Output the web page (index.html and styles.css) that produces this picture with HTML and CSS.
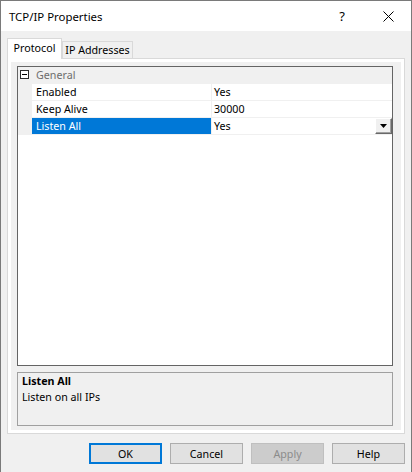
FILE: index.html
```html
<!DOCTYPE html>
<html>
<head>
<meta charset="utf-8">
<title>TCP/IP Properties</title>
<link rel="stylesheet" href="styles.css">
</head>
<body>
<div class="window">
  <div class="titlebar">
    <span class="title">TCP/IP Properties</span>
    <span class="tb-btn help">?</span>
    <span class="tb-btn close">
      <svg width="11" height="11" viewBox="0 0 11 11"><path d="M0.5 0.5 L10.5 10.5 M10.5 0.5 L0.5 10.5" stroke="#000" stroke-width="1" fill="none"/></svg>
    </span>
  </div>
  <div class="body">
    <div class="tabs">
      <div class="tab active">Protocol</div>
      <div class="tab">IP Addresses</div>
      <div class="tab-fill"></div>
    </div>
    <div class="panel">
      <div class="page">
        <div class="grid">
          <div class="row cat">
            <span class="margin"><span class="minus"></span></span>
            <span class="catname">General</span>
          </div>
          <div class="row">
            <span class="margin"></span>
            <span class="name">Enabled</span>
            <span class="value">Yes</span>
          </div>
          <div class="row">
            <span class="margin"></span>
            <span class="name">Keep Alive</span>
            <span class="value">30000</span>
          </div>
          <div class="row sel">
            <span class="margin"></span>
            <span class="name">Listen All</span>
            <span class="value">Yes
              <span class="drop"><svg width="7" height="4" viewBox="0 0 7 4"><path d="M0 0 H7 L3.5 4 Z" fill="#000"/></svg></span>
            </span>
          </div>
        </div>
        <div class="desc">
          <div class="desc-title">Listen All</div>
          <div class="desc-text">Listen on all IPs</div>
        </div>
      </div>
    </div>
    <div class="buttons">
      <button class="btn default">OK</button>
      <button class="btn">Cancel</button>
      <button class="btn disabled">Apply</button>
      <button class="btn">Help</button>
    </div>
  </div>
</div>
</body>
</html>
```
FILE: styles.css
```css
* { box-sizing: border-box; }
html, body { margin: 0; padding: 0; }
body {
  width: 412px;
  height: 472px;
  overflow: hidden;
  font-family: "Noto Sans", "Liberation Sans", sans-serif;
  font-size: 10.7px;
  color: #000;
  background: #f0f0f0;
}
.window {
  width: 412px;
  height: 472px;
  border: 1px solid #7a7a7a;
  border-bottom: none;
  background: #f0f0f0;
  display: flex;
  flex-direction: column;
}
.titlebar {
  flex: none;
  height: 30px;
  background: #fff;
  display: flex;
  align-items: center;
}
.title {
  flex: 1;
  padding-left: 8px;
  font-size: 11.4px;
}
.tb-btn {
  width: 46px;
  height: 30px;
  display: flex;
  align-items: center;
  justify-content: center;
}
.help { font-size: 13px; }
.body {
  flex: 1;
  padding: 7px 6px 0 6px;
  display: flex;
  flex-direction: column;
}
.tabs {
  display: flex;
  align-items: flex-end;
  height: 21px;
}
.tab {
  height: 18px;
  width: 71px;
  border: 1px solid #d9d9d9;
  background: #f0f0f0;
  display: flex;
  align-items: center;
  justify-content: center;
}
.tab.active {
  width: 55px;
  height: 21px;
  border-bottom: none;
  background: #fff;
  padding-bottom: 2px;
}
.tab-fill {
  flex: 1;
  border-bottom: 1px solid #d9d9d9;
}
.panel {
  height: 375px;
  border: 1px solid #d9d9d9;
  border-top: none;
  background: #fff;
  padding: 3px;
}
.page {
  height: 100%;
  background: #f0f0f0;
  padding: 4px 8px 4px 6px;
  display: flex;
  flex-direction: column;
}
.grid {
  height: 300px;
  border: 1px solid #646464;
  background: #fff;
}
.row {
  display: flex;
  height: 17px;
  border-bottom: 1px solid #f0f0f0;
  line-height: 16px;
}
.margin {
  width: 14px;
  flex: none;
  background: #f0f0f0;
  position: relative;
}
.name {
  width: 179px;
  flex: none;
  padding-left: 4px;
}
.value {
  flex: 1;
  border-left: 1px solid #f0f0f0;
  padding-left: 2px;
  display: flex;
  align-items: center;
}
.row.cat { background: #f0f0f0; }
.catname {
  padding-left: 4px;
  color: #6d6d6d;
}
.minus {
  position: absolute;
  left: 2px;
  top: 3px;
  width: 9px;
  height: 9px;
  border: 1px solid #2b2b2b;
  background: #fff;
}
.minus::after {
  content: "";
  position: absolute;
  left: 1px;
  top: 3px;
  width: 5px;
  height: 1px;
  background: #000;
}
.row.sel .name {
  background: #0078d7;
  color: #fff;
}
.row.sel .value { background: #fff; }
.drop {
  margin-left: auto;
  width: 17px;
  height: 16px;
  background: #f0f0f0;
  border-top: 1px solid #fff;
  border-left: 1px solid #fff;
  border-right: 1px solid #696969;
  border-bottom: 1px solid #696969;
  box-shadow: inset -1px -1px 0 #a0a0a0;
  display: flex;
  align-items: center;
  justify-content: center;
}
.desc {
  margin-top: 6px;
  height: 54px;
  border: 1px solid #a0a0a0;
  background: #f0f0f0;
  padding: 0 4px;
  line-height: 16px;
}
.desc-title { font-weight: bold; }
.buttons {
  margin-top: 9px;
  display: flex;
  justify-content: flex-end;
  gap: 8px;
}
.btn {
  width: 73px;
  height: 21px;
  font-family: inherit;
  font-size: 10.7px;
  background: #e1e1e1;
  border: 1px solid #adadad;
  color: #000;
  padding: 0;
  margin: 0;
}
.btn.default { border: 2px solid #0078d7; }
.btn.disabled {
  background: #cccccc;
  border-color: #bfbfbf;
  color: #8b8b8b;
}
```
